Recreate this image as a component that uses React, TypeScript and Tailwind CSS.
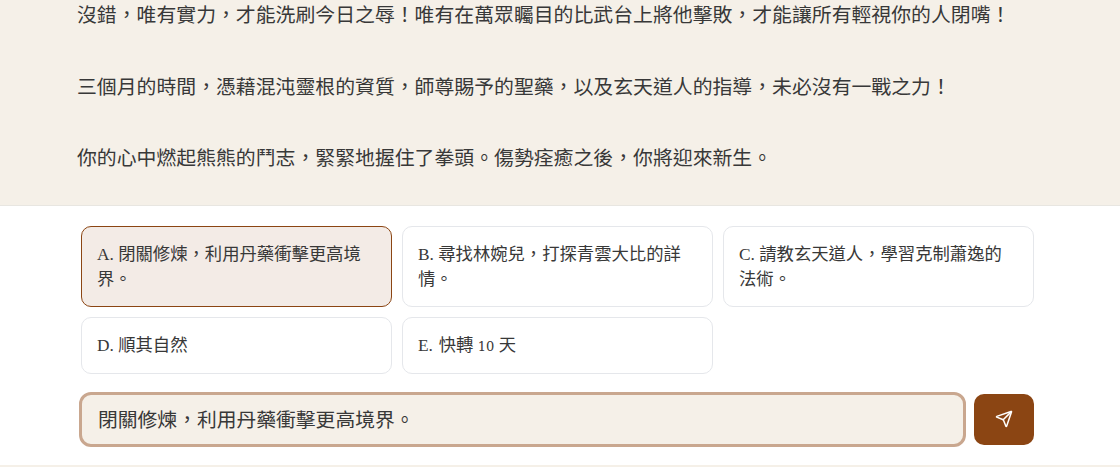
import { Send } from 'lucide-react';

const paragraphs = [
  '沒錯\uFF0C唯有實力\uFF0C才能洗刷今日之辱\uFF01唯有在萬眾矚目的比武台上將他擊敗\uFF0C才能讓所有輕視你的人閉嘴\uFF01',
  '三個月的時間\uFF0C憑藉混沌靈根的資質\uFF0C師尊賜予的聖藥\uFF0C以及玄天道人的指導\uFF0C未必沒有一戰之力\uFF01',
  '你的心中燃起熊熊的鬥志\uFF0C緊緊地握住了拳頭。傷勢痊癒之後\uFF0C你將迎來新生。',
];

const options = [
  'A. 閉關修煉\uFF0C利用丹藥衝擊更高境界。',
  'B. 尋找林婉兒\uFF0C打探青雲大比的詳情。',
  'C. 請教玄天道人\uFF0C學習克制蕭逸的法術。',
  'D. 順其自然',
];

export default function App() {
  return (
    <div className="h-[467px] w-[1120px] overflow-hidden bg-white text-[#383838] font-['Liberation_Serif','Noto_Sans_CJK_TC',serif]">
      {/* story text */}
      <div className="h-[206px] overflow-hidden border-b border-[#e8e6e1] bg-[#f5f0e8] px-[77px]">
        <div className="-mt-[4px] flex flex-col gap-[36.5px] font-['Noto_Sans_CJK_TC',sans-serif] text-[19.87px] leading-[35px]">
          {paragraphs.map((p) => (
            <p key={p}>{p}</p>
          ))}
        </div>
      </div>

      {/* choices */}
      <div className="grid grid-cols-3 gap-[10px] pl-[81px] pr-[86px] pt-[20px]">
        {options.map((o, i) => (
          <button
            key={o}
            className={`rounded-[10px] border px-[15px] pb-[14px] pt-[16px] text-left text-[17.33px] leading-[24.5px] ${
              i === 0 ? 'border-[#8b4513] bg-[#f3ebe6]' : 'border-[#e5e7eb] bg-white'
            }`}
          >
            {o}
          </button>
        ))}
        <button className="rounded-[10px] border border-[#e5e7eb] bg-white px-[15px] pb-[14px] pt-[16px] text-left text-[17.33px] leading-[24.5px]">
          <span className="mr-[1.5px]">E.</span> 快轉 <span className="font-['DejaVu_Serif',serif] text-[13px] leading-none">10</span> 天
        </button>
      </div>

      {/* input row */}
      <div className="flex items-center gap-2 pl-[79px] pr-[86px] pt-[18px]">
        <div className="flex h-[55px] flex-1 items-center rounded-[12px] border-[3px] border-[#c9a78f] bg-[#f5f0e8] px-4 font-['Noto_Sans_CJK_TC',sans-serif] text-[19.8px]">
          {'閉關修煉\uFF0C利用丹藥衝擊更高境界。'}
        </div>
        <button className="flex h-[51px] w-[60px] items-center justify-center rounded-[10px] bg-[#8b4513] text-white">
          <Send size={18} />
        </button>
      </div>
      <div className="mt-[18px] h-[4px] bg-[#f5f0e8]" />
    </div>
  );
}
